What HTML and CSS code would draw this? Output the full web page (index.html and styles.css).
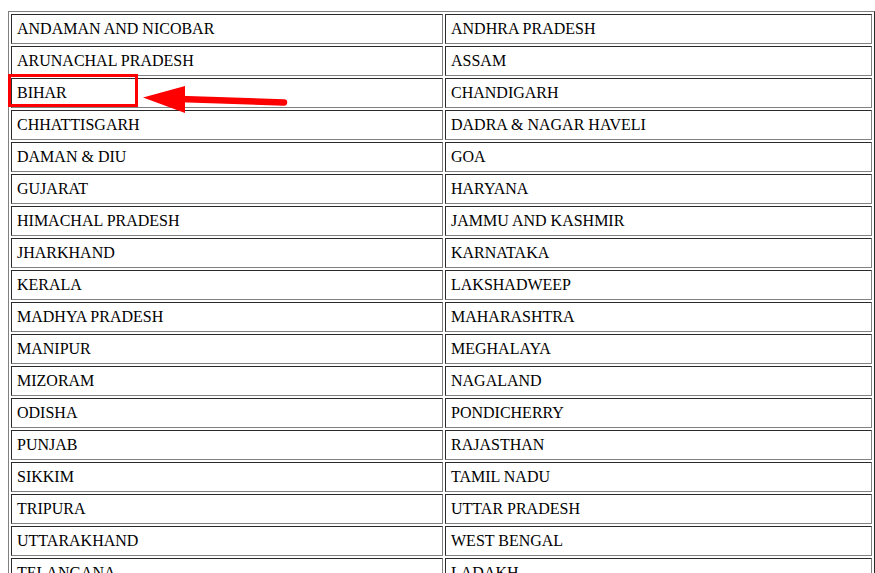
FILE: index.html
```html
<!DOCTYPE html>
<html>
<head>
<meta charset="utf-8">
<link rel="stylesheet" href="styles.css">
</head>
<body>
<div class="page">
<table class="states">
<colgroup><col class="c1"><col class="c2"></colgroup>
<tr><td>ANDAMAN AND NICOBAR</td><td>ANDHRA PRADESH</td></tr>
<tr><td>ARUNACHAL PRADESH</td><td>ASSAM</td></tr>
<tr><td>BIHAR</td><td>CHANDIGARH</td></tr>
<tr><td>CHHATTISGARH</td><td>DADRA &amp; NAGAR HAVELI</td></tr>
<tr><td>DAMAN &amp; DIU</td><td>GOA</td></tr>
<tr><td>GUJARAT</td><td>HARYANA</td></tr>
<tr><td>HIMACHAL PRADESH</td><td>JAMMU AND KASHMIR</td></tr>
<tr><td>JHARKHAND</td><td>KARNATAKA</td></tr>
<tr><td>KERALA</td><td>LAKSHADWEEP</td></tr>
<tr><td>MADHYA PRADESH</td><td>MAHARASHTRA</td></tr>
<tr><td>MANIPUR</td><td>MEGHALAYA</td></tr>
<tr><td>MIZORAM</td><td>NAGALAND</td></tr>
<tr><td>ODISHA</td><td>PONDICHERRY</td></tr>
<tr><td>PUNJAB</td><td>RAJASTHAN</td></tr>
<tr><td>SIKKIM</td><td>TAMIL NADU</td></tr>
<tr><td>TRIPURA</td><td>UTTAR PRADESH</td></tr>
<tr><td>UTTARAKHAND</td><td>WEST BENGAL</td></tr>
<tr><td>TELANGANA</td><td>LADAKH</td></tr>
</table>
<svg class="annot" width="300" height="120" viewBox="0 0 300 120">
  <rect x="9.5" y="75.5" width="127" height="30" fill="none" stroke="#ff0000" stroke-width="3"/>
  <line x1="180" y1="99" x2="284" y2="102.5" stroke="#ff0000" stroke-width="6.5" stroke-linecap="round"/>
  <polygon points="143,97.5 185,86 185,113" fill="#ff0000"/>
</svg>
</div>
</body>
</html>
```

FILE: styles.css
```css
html, body {
  margin: 0;
  padding: 0;
  background: #ffffff;
}
.page {
  position: relative;
  padding: 11px 0 0 8px;
}
.states {
  width: 867px;
  table-layout: fixed;
  border-collapse: separate;
  border-spacing: 2px;
  border: 1px solid;
  border-color: #808080 #2b2b2b #2b2b2b #808080;
  font-family: "Liberation Serif", "Times New Roman", serif;
  font-size: 16px;
  color: #000000;
}
.c1 { width: 432px; }
.c2 { width: 427px; }
.states td {
  height: 18px;
  line-height: 18px;
  padding: 5px 5px;
  border: 1px solid;
  border-color: #2b2b2b #808080 #808080 #2b2b2b;
  white-space: nowrap;
}
.annot {
  position: absolute;
  left: 0;
  top: 0;
}
```
